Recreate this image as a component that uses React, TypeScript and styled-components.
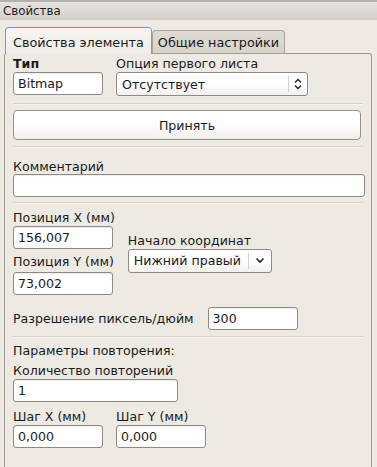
import React from 'react'
import styled, { createGlobalStyle } from 'styled-components'

const Global = createGlobalStyle`
  html, body {
    margin: 0;
    padding: 0;
    background: #edeae4;
  }
  body {
    font-family: "DejaVu Sans", "Liberation Sans", sans-serif;
    color: #1a1a1a;
  }
`

const Window = styled.div`
  width: 377px;
  height: 467px;
  overflow: hidden;
  background: #edeae4;
  display: flex;
  flex-direction: column;
`

const TitleBar = styled.div`
  height: 18px;
  border-top: 2px solid #b3b0ab;
  background: linear-gradient(#e6e4e0, #d2cfc9);
  font-size: 11.8px;
  line-height: 18px;
  padding-left: 3px;
  color: #222;
`

const TabBar = styled.div`
  display: flex;
  align-items: flex-end;
  height: 26px;
  margin-top: 7px;
  padding-left: 5px;
`

const Tab = styled.div<{ $active?: boolean }>`
  box-sizing: border-box;
  height: ${p => (p.$active ? '27px' : '23px')};
  padding: 0 ${p => (p.$active ? '7px' : '5px')};
  font-size: 12.8px;
  display: flex;
  align-items: center;
  border: 1px solid ${p => (p.$active ? '#9b968d' : '#aaa59c')};
  border-top-color: ${p => (p.$active ? '#7396c0' : '#aaa59c')};
  border-bottom: none;
  border-radius: 4px 4px 0 0;
  background: ${p =>
    p.$active
      ? 'linear-gradient(#f6f5f2, #efede9)'
      : 'linear-gradient(#dfdbd4, #d7d3cb)'};
  margin-bottom: ${p => (p.$active ? '-1px' : '0')};
  position: relative;
  z-index: ${p => (p.$active ? 1 : 0)};
  padding-top: ${p => (p.$active ? '2px' : '0')};
`

const Panel = styled.div`
  flex: 1;
  margin: 0 5px 0 4px;
  border: 1px solid #a19c93;
  border-bottom: none;
  border-radius: 3px 3px 0 0;
  padding: 2px 8px 0 8px;
  display: flex;
  flex-direction: column;
  background: #edeae4;
`

const Label = styled.div<{ $bold?: boolean }>`
  font-size: 12.6px;
  line-height: 15px;
  font-weight: ${p => (p.$bold ? 'bold' : 'normal')};
  white-space: nowrap;
`

const Field = styled.div<{ $w: number }>`
  box-sizing: border-box;
  width: ${p => p.$w}px;
  height: 23px;
  border: 1px solid #8e8a83;
  border-radius: 3px;
  background: #fff;
  font-size: 12.6px;
  line-height: 21px;
  padding-left: 4px;
  box-shadow: inset 0 1px 1px rgba(0, 0, 0, 0.08);
`

const Combo = styled.div<{ $w: number; $h: number }>`
  box-sizing: border-box;
  width: ${p => p.$w}px;
  height: ${p => p.$h}px;
  border: 1px solid #8e8a83;
  border-radius: 3px;
  background: linear-gradient(#ffffff 50%, #f3f1ee);
  font-size: 12.6px;
  display: flex;
  align-items: center;
`

const ComboText = styled.div`
  flex: 1;
  padding-left: 5px;
  white-space: nowrap;
`

const ComboArrow = styled.div<{ $w: number }>`
  width: ${p => p.$w}px;
  align-self: stretch;
  margin: 3px 0;
  border-left: 1px solid #d3d0ca;
  display: flex;
  align-items: center;
  justify-content: center;
`

const Separator = styled.div<{ $top: number; $bottom: number }>`
  height: 1px;
  background: #d6d2ca;
  border-bottom: 1px solid #f6f5f2;
  margin: ${p => p.$top}px 0 ${p => p.$bottom}px 0;
`

const Button = styled.div`
  box-sizing: border-box;
  height: 30px;
  margin-right: 2px;
  border: 1px solid #96918a;
  border-radius: 4px;
  background: linear-gradient(#ffffff 45%, #f1efeb);
  display: flex;
  align-items: center;
  justify-content: center;
  font-size: 12.6px;
`

const Row = styled.div<{ $gap: number; $align?: string }>`
  display: flex;
  gap: ${p => p.$gap}px;
  align-items: ${p => p.$align || 'flex-start'};
`

const Column = styled.div<{ $gap: number }>`
  display: flex;
  flex-direction: column;
  gap: ${p => p.$gap}px;
`

const Spacer = styled.div<{ $h: number }>`
  height: ${p => p.$h}px;
`

function UpDown() {
  return (
    <svg width="8" height="12" viewBox="0 0 8 12">
      <path d="M1 4.5 L4 1.5 L7 4.5 M1 7.5 L4 10.5 L7 7.5" fill="none" stroke="#222" strokeWidth="1.4" />
    </svg>
  )
}

function Down() {
  return (
    <svg width="10" height="7" viewBox="0 0 10 7">
      <path d="M1.5 1.5 L5 5 L8.5 1.5" fill="none" stroke="#222" strokeWidth="1.6" />
    </svg>
  )
}

export default function App() {
  return (
    <>
      <Global />
      <Window>
        <TitleBar>Свойства</TitleBar>
        <TabBar>
          <Tab $active>Свойства элемента</Tab>
          <Tab>Общие настройки</Tab>
        </TabBar>
        <Panel>
          <Row $gap={13}>
            <Column $gap={1}>
              <Label $bold>Тип</Label>
              <Field $w={90}>Bitmap</Field>
            </Column>
            <Column $gap={1}>
              <Label>Опция первого листа</Label>
              <Combo $w={192} $h={24}>
                <ComboText>Отсутствует</ComboText>
                <ComboArrow $w={18}>
                  <UpDown />
                </ComboArrow>
              </Combo>
            </Column>
          </Row>

          <Separator $top={7} $bottom={5} />
          <Button>Принять</Button>
          <Separator $top={6} $bottom={11} />

          <Column $gap={0}>
            <Label>Комментарий</Label>
            <Field $w={352} />
          </Column>

          <Separator $top={5} $bottom={6} />

          <Row $gap={13} $align="center">
            <Column $gap={1}>
              <Label>Позиция X (мм)</Label>
              <Field $w={100}>156,007</Field>
              <Spacer $h={3} />
              <Label>Позиция Y (мм)</Label>
              <Spacer $h={1} />
              <Field $w={100}>73,002</Field>
            </Column>
            <Column $gap={1}>
              <Label>Начало координат</Label>
              <Combo $w={144} $h={24}>
                <ComboText>Нижний правый</ComboText>
                <ComboArrow $w={22}>
                  <Down />
                </ComboArrow>
              </Combo>
            </Column>
          </Row>

          <Spacer $h={12} />
          <Row $gap={14} $align="center">
            <Label>Разрешение пиксель/дюйм</Label>
            <Field $w={90}>300</Field>
          </Row>

          <Separator $top={6} $bottom={5} />

          <Label>Параметры повторения:</Label>
          <Spacer $h={5} />
          <Column $gap={1}>
            <Label>Количество повторений</Label>
            <Field $w={165}>1</Field>
          </Column>
          <Spacer $h={7} />
          <Row $gap={13}>
            <Column $gap={1}>
              <Label>Шаг X (мм)</Label>
              <Field $w={90}>0,000</Field>
            </Column>
            <Column $gap={1}>
              <Label>Шаг Y (мм)</Label>
              <Field $w={90}>0,000</Field>
            </Column>
          </Row>
        </Panel>
      </Window>
    </>
  )
}
